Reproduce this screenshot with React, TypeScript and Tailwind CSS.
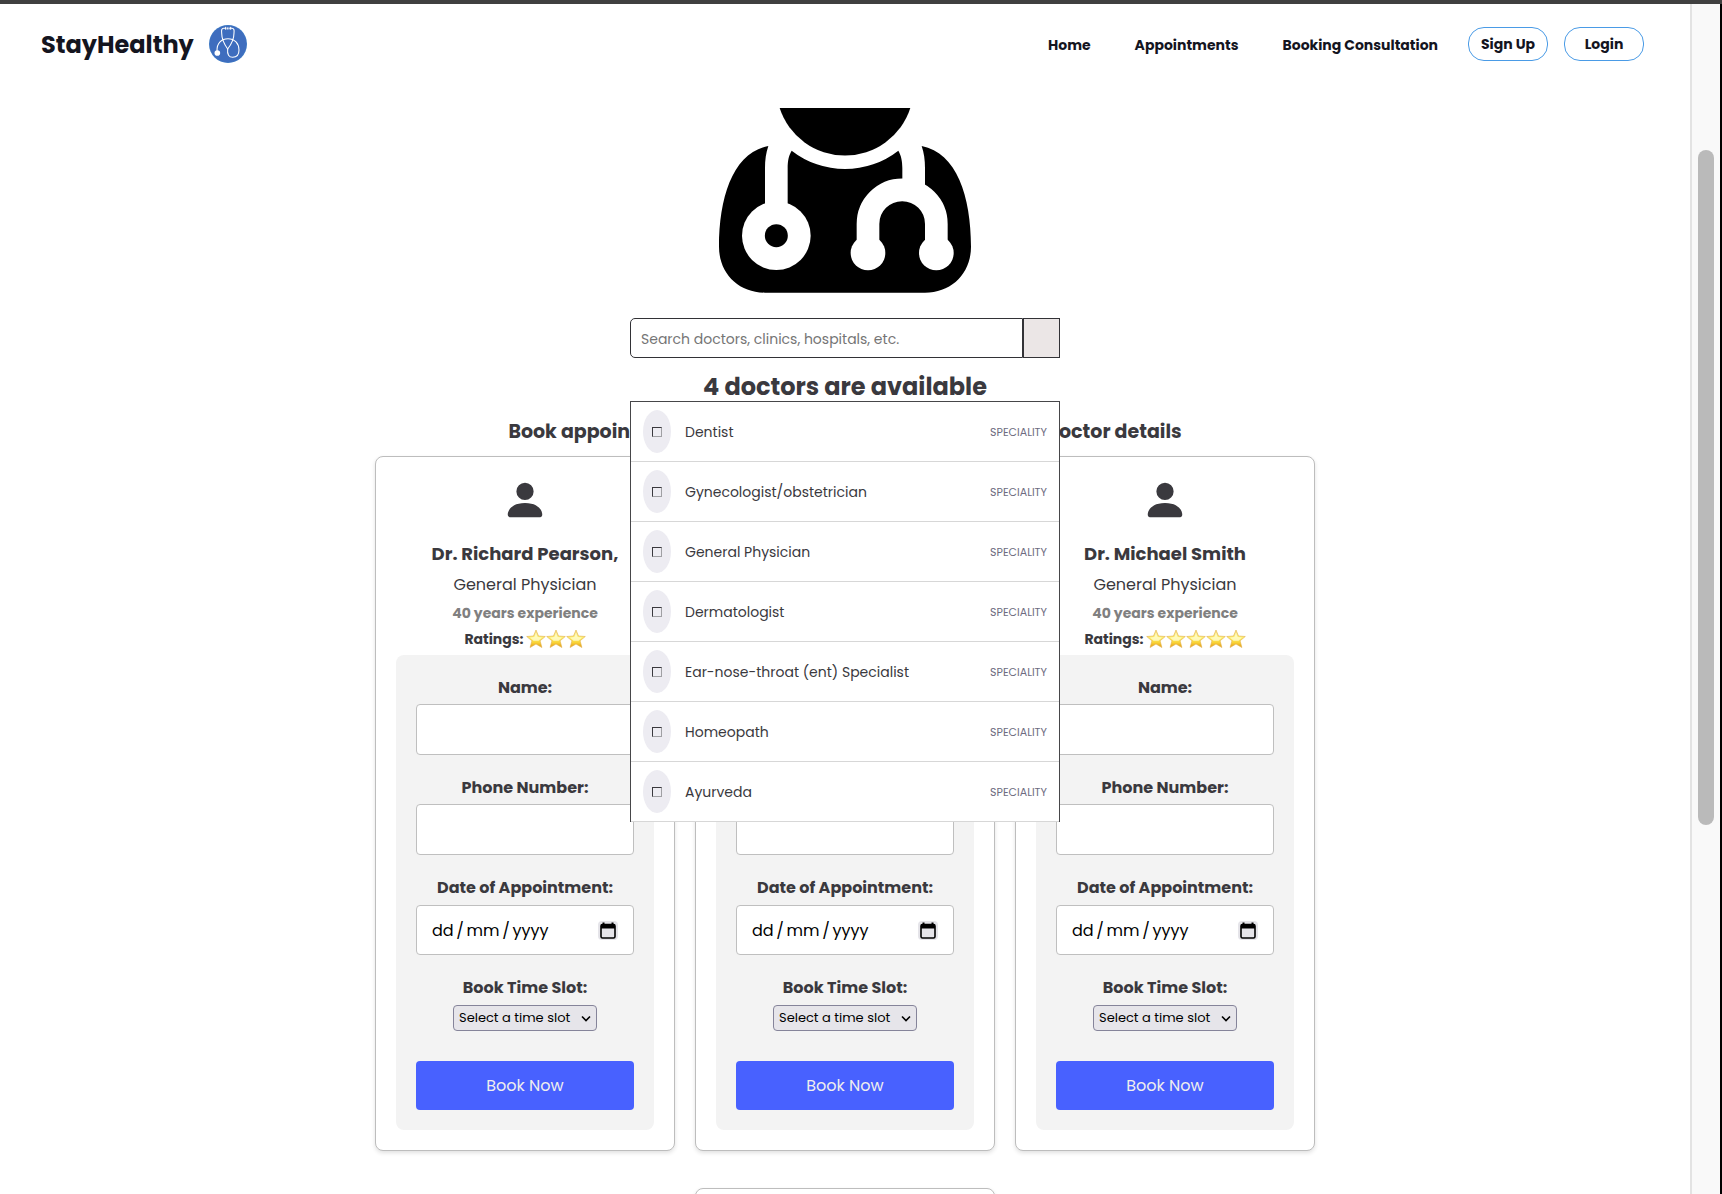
import { useId } from "react";

const specialities = [
  "Dentist",
  "Gynecologist/obstetrician",
  "General Physician",
  "Dermatologist",
  "Ear-nose-throat (ent) Specialist",
  "Homeopath",
  "Ayurveda",
];

type Doctor = { name: string; speciality: string; experience: number; rating: number };

const doctors: Doctor[] = [
  { name: "Dr. Richard Pearson,", speciality: "General Physician", experience: 40, rating: 3 },
  { name: "Dr. Emily Carter", speciality: "General Physician", experience: 40, rating: 4 },
  { name: "Dr. Michael Smith", speciality: "General Physician", experience: 40, rating: 5 },
  { name: "Dr. Sarah Jones", speciality: "General Physician", experience: 40, rating: 4 },
];

function LogoIcon() {
  return (
    <svg viewBox="0 0 114 114" className="size-[38px]" aria-hidden="true">
      <circle cx="57" cy="57" r="57" fill="#3f7cc6" />
      <circle cx="57" cy="57" r="55" fill="#3e6dbe" />
      <g fill="none" stroke="#fff" strokeWidth="3.2" strokeLinecap="round">
        <path d="M50 10h-6c-6 0-7 5-6 14 0 20 8 34 18 48" />
        <path d="M63 10h6c6 0 7 5 6 14 0 20-8 34-19 48" />
        <path d="M50 7v6M55 8v4M60 8v4M65 7v6" />
        <path d="M24 78c-1-24 14-37 33-37 20 0 33 15 33 34 0 14-8 22-19 22-11 0-17-9-15-25" />
      </g>
      <circle cx="25" cy="84" r="8.5" fill="#fff" />
    </svg>
  );
}

function DoctorIllustration() {
  return (
    <svg viewBox="297 54 756 555" className="h-[185px] w-[252px]" aria-hidden="true">
      <path d="M479 54A206 206 0 0 0 871 54Z" />
      <path d="M445 168C340 188 297 320 297 470C297 550 355 608 435 608H915C995 608 1053 550 1053 470C1053 320 1010 188 905 168C912 188 915 210 915 235V300H847V235C847 212 843 196 835 182A260 260 0 0 1 515 182C507 195 503 210 503 235V345H435V235C435 210 438 188 445 168Z" />
      <circle cx="469" cy="437" r="103" fill="#fff" />
      <circle cx="469" cy="437" r="34.5" />
      <path
        d="M744 490V402A102.500 102.500 0 0 1 949 402V490"
        fill="none"
        stroke="#fff"
        strokeWidth="68"
      />
      <circle cx="744" cy="489" r="52" fill="#fff" />
      <circle cx="949" cy="489" r="52" fill="#fff" />
    </svg>
  );
}

function PersonIcon() {
  return (
    <svg viewBox="0 0 16 16" className="size-[46px]" fill="currentColor" aria-hidden="true">
      <path d="M3 14s-1 0-1-1 1-4 6-4 6 3 6 4-1 1-1 1zm5-6a3 3 0 1 0 0-6 3 3 0 0 0 0 6" />
    </svg>
  );
}

function Star() {
  const id = useId();
  return (
    <svg viewBox="0 0 20 20" className="size-5" aria-hidden="true">
      <defs>
        <linearGradient id={id} x1="0" y1="0" x2="0" y2="1">
          <stop offset="0" stopColor="#f7e08a" />
          <stop offset="0.45" stopColor="#fdf06a" />
          <stop offset="0.72" stopColor="#f9d336" />
          <stop offset="1" stopColor="#e29a17" />
        </linearGradient>
      </defs>
      <path
        d="M10 1l2.500 6 6.800.5-5.200 4.300 1.800 6.700L10 15l-5.900 3.500 1.800-6.700L.7 7.500 7.500 7z"
        fill={`url(#${id})`}
        stroke="#e2b04c"
        strokeWidth="0.6"
        strokeLinejoin="round"
      />
      <path d="M10 3.500l1.700 4.500 4.300.5-3.500 3.200h-5L4 8.500 8.300 8z" fill="#fffdd0" opacity="0.8" />
    </svg>
  );
}

function CalendarIcon() {
  return (
    <svg viewBox="0 0 18 18" className="size-[18px]" aria-hidden="true">
      <path d="M4.500 0.500v3M13.500 0.500v3" stroke="#000" strokeWidth="2" />
      <rect x="2" y="2.500" width="14" height="13.500" rx="1.500" fill="none" stroke="#000" strokeWidth="1.600" />
      <path d="M2 2.500h14v4H2z" />
    </svg>
  );
}

function SpecialityMenu() {
  return (
    <ul className="absolute inset-x-0 top-[83px] z-10 border-x border-t border-[#464649] bg-white">
      {specialities.map((name) => (
        <li key={name} className="flex h-15 items-center border-b border-[#d7d7d7] px-3">
          <span className="flex h-[43px] w-7 items-center justify-center rounded-[50%] bg-[#edecf2]">
            <span className="size-2.5 border border-t-[#3a393e] border-r-[#a0a0a4] border-b-[#a0a0a4] border-l-[#3a393e]" />
          </span>
          <span className="ml-3.5 text-sm text-[#3a393e]">{name}</span>
          <span className="ml-auto pt-0.5 text-[11px] text-[#6d6b80]">SPECIALITY</span>
        </li>
      ))}
    </ul>
  );
}

const labelClass = "block text-center text-base leading-6 font-bold";
const fieldClass = "mt-1 h-[51px] w-full rounded border border-[#bfbfbf] bg-white px-[15px] text-base text-black";

function DoctorCard({ doctor }: { doctor: Doctor }) {
  const id = useId();
  return (
    <article className="flex w-75 flex-col items-center rounded-lg border border-[#bdbdbd] bg-white p-5 shadow-[0_2px_4px_rgba(0,0,0,0.12)]">
      <PersonIcon />
      <h3 className="mt-[17px] text-lg leading-7 font-bold">{doctor.name}</h3>
      <p className="mt-[5px] text-base leading-6">{doctor.speciality}</p>
      <p className="mt-1.5 text-sm leading-5 font-bold text-[#808080]">{doctor.experience} years experience</p>
      <div className="my-1.5 flex h-5 items-center text-sm leading-5 font-bold">
        <span>Ratings:</span>
        <span className="ml-0.5 flex" role="img" aria-label={`${doctor.rating} stars`}>
          {Array.from({ length: doctor.rating }, (_, i) => (
            <Star key={i} />
          ))}
        </span>
      </div>
      <form
        className="flex w-full flex-col gap-[21px] rounded-lg bg-[#f3f3f3] px-5 pt-[21px] pb-5"
        onSubmit={(e) => e.preventDefault()}
      >
        <div>
          <label htmlFor={`${id}-name`} className={labelClass}>Name:</label>
          <input id={`${id}-name`} type="text" className={fieldClass} />
        </div>
        <div>
          <label htmlFor={`${id}-phone`} className={labelClass}>Phone Number:</label>
          <input id={`${id}-phone`} type="tel" className={fieldClass} />
        </div>
        <div>
          <label htmlFor={`${id}-date`} className={labelClass}>Date of Appointment:</label>
          <div className="relative mt-[5px]">
            <input
              id={`${id}-date`}
              type="text"
              placeholder={"dd\u2006/\u2006mm\u2006/\u2006yyyy"}
              className="block h-[50px] w-full rounded border border-[#bfbfbf] bg-white px-[15px] text-base text-black placeholder:text-black"
            />
            <button
              type="button"
              aria-label="Open calendar"
              className="absolute top-4 right-4 flex h-[19px] w-5 items-center justify-center rounded-sm bg-[#e5e4e9]"
            >
              <CalendarIcon />
            </button>
          </div>
        </div>
        <div>
          <label htmlFor={`${id}-slot`} className={labelClass}>Book Time Slot:</label>
          <div className="relative mx-auto mt-[5px] w-36">
            <select
              id={`${id}-slot`}
              className="block h-[26px] w-full appearance-none rounded border border-[#85849a] bg-[#e6e5ea] pl-[5px] text-[13px] text-black"
            >
              <option>Select a time slot</option>
              <option>9:00 AM</option>
              <option>10:00 AM</option>
            </select>
            <svg viewBox="0 0 10 8" className="pointer-events-none absolute top-2.5 right-1.5 h-2 w-2.5" aria-hidden="true">
              <path d="M1 1.500l4 4 4-4" fill="none" stroke="#000" strokeWidth="1.600" />
            </svg>
          </div>
        </div>
        <button type="submit" className="mt-[9px] h-[49px] w-full rounded bg-[#4861ff] text-base text-[#eeeeee]">
          Book Now
        </button>
      </form>
    </article>
  );
}

function Navbar() {
  return (
    <header className="flex h-20 items-center justify-between pr-[46px] pl-[41px]">
      <a href="#home" className="flex items-center gap-[15px] text-2xl font-bold text-[#14151f]">
        <span className="pt-0.5">StayHealthy</span>
        <LogoIcon />
      </a>
      <nav className="flex items-center text-sm font-bold text-[#14151f]">
        <a href="#home" className="mr-11 pt-0.5">Home</a>
        <a href="#appointments" className="mr-11 pt-0.5">Appointments</a>
        <a href="#consultation" className="mr-7.5 pt-0.5">Booking Consultation</a>
        <button type="button" className="mr-4 h-[34px] w-20 rounded-2xl border border-[#4a9be6]">Sign Up</button>
        <button type="button" className="h-[34px] w-20 rounded-2xl border border-[#4a9be6]">Login</button>
      </nav>
    </header>
  );
}

export default function App() {
  return (
    <div className="flex h-screen flex-col overflow-hidden bg-white font-['Poppins','Inter',sans-serif] text-[#3a393e]">
      <div className="h-1 shrink-0 bg-[#404040]" />
      <div className="flex min-h-0 flex-1">
        <div className="min-w-0 flex-1 overflow-hidden">
          <Navbar />
          <main className="flex flex-col items-center pt-6">
            <DoctorIllustration />
            <form className="relative mt-[25px] flex h-10 w-[430px]" role="search" onSubmit={(e) => e.preventDefault()}>
              <input
                type="text"
                aria-label="Search doctors"
                placeholder="Search doctors, clinics, hospitals, etc."
                className="min-w-0 flex-1 rounded-l-[5px] border border-[#323236] bg-white px-2.5 pt-0.5 text-sm placeholder:text-[#757575]"
              />
              <button type="submit" aria-label="Search" className="w-[37px] border border-[#323236] bg-[#ebe6e6]" />
              <SpecialityMenu />
            </form>
            <h1 className="mt-[13px] text-2xl leading-8 font-bold">4 doctors are available</h1>
            <h2 className="mt-[15px] text-[19px] leading-7 font-bold">
              Book appointments with minimum wait time &amp; verified doctor details
            </h2>
            <section className="mt-2.5 flex max-w-[1000px] flex-wrap justify-center gap-x-5 gap-y-[37px]">
              {doctors.map((doctor) => (
                <DoctorCard key={doctor.name} doctor={doctor} />
              ))}
            </section>
          </main>
        </div>
        <div className="w-[30px] shrink-0 border-l-2 border-[#e3e3e3] bg-[#f9f9f9] px-1.5 pt-[146px]" aria-hidden="true">
          <div className="h-[675px] w-4 rounded-full bg-[#bababa]" />
        </div>
        <div className="w-0.5 shrink-0 bg-black" />
      </div>
    </div>
  );
}
